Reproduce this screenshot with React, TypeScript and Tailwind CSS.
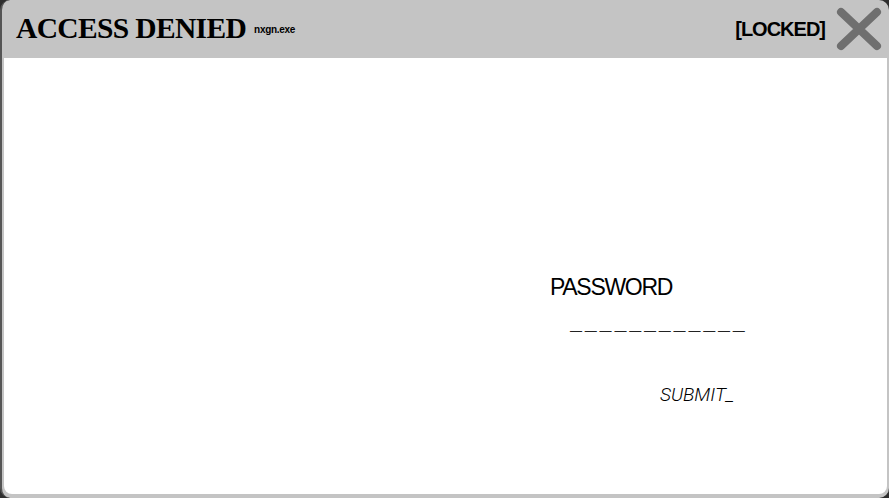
export default function App() {
  return (
    <div className="h-[498px] w-[889px] overflow-hidden bg-[#2e2e2e]">
      <div className="flex h-full w-full flex-col rounded-[10px] border-l-2 border-[#555] bg-[#c4c4c4] px-[2px] pb-[4px]">
        <div className="flex h-[58px] shrink-0 items-center pl-[12px] pr-[4px]">
          <span className="font-['Liberation_Serif',serif] text-[29.5px] font-bold leading-none tracking-[-0.65px] text-black">
            ACCESS DENIED
          </span>
          <span className="ml-[8px] font-['Liberation_Sans',sans-serif] text-[10px] font-bold tracking-[-0.3px] text-black">
            nxgn.exe
          </span>
          <span className="ml-auto mr-[10px] font-['Liberation_Sans',sans-serif] text-[20px] font-bold tracking-[-1px] text-black">
            [LOCKED]
          </span>
          <svg width="48" height="44" viewBox="0 0 48 44">
            <path d="M6 5 L42 39 M42 5 L6 39" stroke="#6f6f6f" strokeWidth="8" strokeLinecap="round" />
          </svg>
        </div>
        <div className="flex flex-1 flex-col rounded-b-[8px] bg-white pl-[546px] pt-[218px]">
          <span className="font-['Liberation_Sans',sans-serif] text-[23px] leading-none tracking-[-1.3px] text-black">
            PASSWORD
          </span>
          <span className="ml-[20px] mt-[16px] font-['Liberation_Mono',monospace] text-[20px] font-bold leading-none tracking-[2.8px] text-[#222]">
            ____________
          </span>
          <span className="ml-[110px] mt-[50px] font-['Roboto',sans-serif] text-[19px] font-light italic leading-none text-black">
            SUBMIT_
          </span>
        </div>
      </div>
    </div>
  );
}
